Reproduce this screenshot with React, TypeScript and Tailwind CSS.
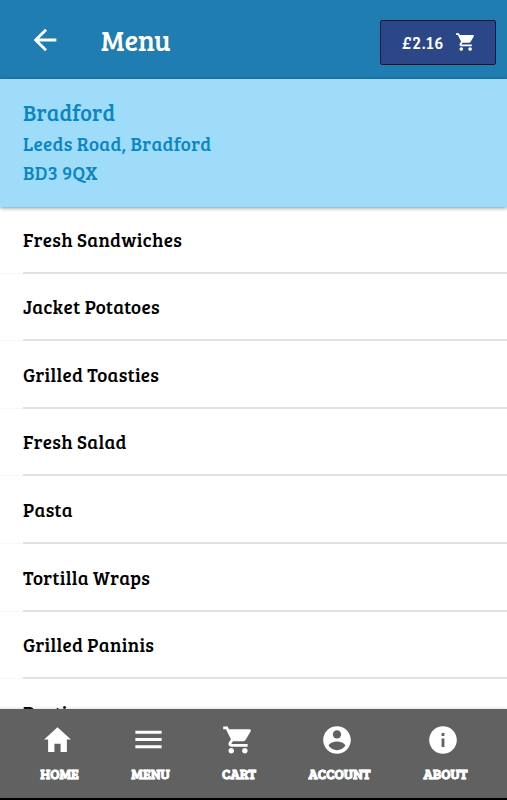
import {
  IoMdArrowBack,
  IoMdCart,
  IoMdContact,
  IoMdHome,
  IoMdInformationCircle,
  IoMdMenu,
} from "react-icons/io";

const categories = [
  "Fresh Sandwiches",
  "Jacket Potatoes",
  "Grilled Toasties",
  "Fresh Salad",
  "Pasta",
  "Tortilla Wraps",
  "Grilled Paninis",
  "Pasties",
];

const tabs = [
  { label: "HOME", icon: IoMdHome, width: "w-[39px]", size: "size-[33px]" },
  { label: "MENU", icon: IoMdMenu, width: "w-[39px]", size: "size-[35px]" },
  { label: "CART", icon: IoMdCart, width: "w-[34px]", size: "size-[34px]" },
  { label: "ACCOUNT", icon: IoMdContact, width: "w-[63px]", size: "size-[34px]" },
  { label: "ABOUT", icon: IoMdInformationCircle, width: "w-[45px]", size: "size-[34px]" },
];

export default function App() {
  return (
    <div className="flex h-[800px] w-full flex-col overflow-hidden bg-white font-['Bree_Serif','DejaVu_Serif_Condensed','DejaVu_Serif',serif]">
      <header className="flex h-[79px] shrink-0 items-center bg-[#1f7db1] pr-[11px] pl-7 text-white">
        <button type="button" aria-label="Back">
          <IoMdArrowBack className="size-[34px]" />
        </button>
        <h1 className="ml-[39px] text-[28px] leading-none tracking-[0.1px]">Menu</h1>
        <button
          type="button"
          className="mt-[5px] ml-auto flex h-[45px] w-[116px] items-center rounded-xs border-[1.5px] border-[#0c1a3c] bg-[#2b4788] pl-[21px] whitespace-nowrap"
        >
          <span className="mt-0.5 w-[42px] text-left text-[17px] tracking-[0.8px]">£2.16</span>
          <IoMdCart className="ml-2.5 size-[22px]" />
        </button>
      </header>

      <section className="relative z-10 h-32 shrink-0 bg-[#9fdcf9] pt-[17px] pl-[23px] text-[#0b86c5] shadow-[0_1px_4px_rgba(0,0,0,0.45)]">
        <h2 className="text-[22px] leading-[33px] tracking-[0.2px]">Bradford</h2>
        <p className="text-[19px] leading-[29px] tracking-[0.33px]">Leeds Road, Bradford</p>
        <p className="text-[19px] leading-[29px] tracking-[0.33px]">BD3 9QX</p>
      </section>

      <ul className="-mt-px min-h-0 flex-1 overflow-hidden">
        {categories.map((category) => (
          <li key={category} className="flex h-[67.6px] text-[19px] tracking-[0.33px] text-black">
            <div className="w-[23px] border-b border-[#f7f7f7]" />
            <div className="flex flex-1 items-center border-b-2 border-[#e2e2e2] pt-0.5">{category}</div>
          </li>
        ))}
      </ul>

      <nav className="relative flex h-[91px] shrink-0 gap-[52px] border-b-2 border-black bg-[#616161] pt-3.5 pl-10 text-white shadow-[0_-1px_2px_rgba(0,0,0,0.12)]">
        {tabs.map(({ label, icon: Icon, width, size }) => (
          <button key={label} type="button" className={`flex flex-col items-center ${width}`}>
            <span className="mr-[5px] flex h-[33px] items-center justify-center">
              <Icon className={`shrink-0 ${size}`} />
            </span>
            <span className="mt-1 text-sm leading-7 font-bold [-webkit-text-stroke:0.3px]">{label}</span>
          </button>
        ))}
      </nav>
    </div>
  );
}
